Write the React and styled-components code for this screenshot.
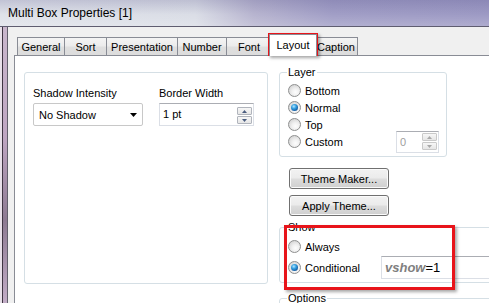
import styled, { createGlobalStyle } from 'styled-components';

const GlobalStyle = createGlobalStyle`
  html, body {
    margin: 0;
    padding: 0;
    background: #f0f0f0;
  }
  body {
    font-family: "Liberation Sans", Arial, sans-serif;
    font-size: 11px;
    color: #000;
  }
`;

const Window = styled.div`
  position: relative;
  width: 489px;
  height: 303px;
  overflow: hidden;
  display: flex;
  flex-direction: column;
`;

const TitleBar = styled.div`
  flex: none;
  height: 26px;
  padding-left: 8px;
  display: flex;
  align-items: center;
  font-size: 12px;
  border-bottom: 1px solid #5f5d70;
  background:
    linear-gradient(180deg, rgba(60, 55, 120, 0.18) 0%, rgba(255, 255, 255, 0) 55%, rgba(255, 255, 255, 0.18) 100%),
    linear-gradient(90deg, #dfe2e9 0%, #dadde6 40%, #b7b4cf 52%, #a19ec6 68%, #9d9ac4 100%);
`;

const Frame = styled.div`
  flex: 1;
  display: flex;
  min-height: 0;
`;

const SideBorder = styled.div`
  flex: none;
  width: 7px;
  background:
    linear-gradient(90deg, #e9e1ea 0 2px, #3f3542 2px 3px, transparent 3px),
    linear-gradient(180deg, #c9b6cc 0%, #bfa6c2 40%, #8d7a92 70%, #c2acc6 100%);
`;

const Client = styled.div`
  flex: 1;
  display: flex;
  flex-direction: column;
  min-width: 0;
  background: #f0f0f0;
  border-left: 1px solid #62606c;
  padding: 7px 0 0 6px;
`;

const TabStrip = styled.div`
  flex: none;
  height: 21px;
  display: flex;
  align-items: flex-end;
  padding-left: 3px;
`;

const Tab = styled.div`
  box-sizing: border-box;
  flex: none;
  width: ${(p) => p.$w}px;
  height: ${(p) => (p.$active ? 22 : 18)}px;
  margin: 0 ${(p) => (p.$active ? -3 : -1)}px ${(p) => (p.$active ? -1 : 0)}px ${(p) => (p.$active ? -2 : 0)}px;
  padding-bottom: ${(p) => (p.$active ? 2 : 0)}px;
  display: flex;
  align-items: center;
  justify-content: center;
  border: 1px solid #898c95;
  border-bottom: none;
  position: relative;
  z-index: ${(p) => (p.$active ? 1 : 0)};
  background: ${(p) =>
    p.$active
      ? '#ffffff'
      : 'linear-gradient(180deg, #f4f4f4 0%, #ececec 45%, #dfdfdf 55%, #dcdcdc 100%)'};
`;

const Panel = styled.div`
  flex: 1;
  display: flex;
  gap: 11px;
  align-items: flex-start;
  margin-right: -30px;
  padding: 16px 0 0 9px;
  background: #fff;
  border: 1px solid #898c95;
`;

const Group = styled.div`
  box-sizing: border-box;
  flex: none;
  width: 244px;
  height: 212px;
  border: 1px solid #d5dfe5;
  border-radius: 3px;
  padding: 14px 8px;
  display: flex;
  gap: 16px;
`;

const Field = styled.div`
  display: flex;
  flex-direction: column;
  gap: 3px;
`;

const Label = styled.div`
  line-height: 13px;
`;

const Combo = styled.div`
  box-sizing: border-box;
  width: 110px;
  height: 23px;
  display: flex;
  align-items: center;
  justify-content: space-between;
  padding: 1px 5px 0 5px;
  border: 1px solid #c8c8c8;
  border-radius: 2px;
  background: #fff;
`;

const SpinBox = styled.div`
  box-sizing: border-box;
  width: ${(p) => p.$w}px;
  height: ${(p) => p.$h}px;
  display: flex;
  align-items: ${(p) => (p.$top ? 'flex-start' : 'center')};
  justify-content: space-between;
  padding: ${(p) => (p.$top ? '4px' : '0')} 1px 0 3px;
  border: 1px solid #dbdfe6;
  border-top-color: #abadb3;
  background: #fff;
  color: ${(p) => (p.$disabled ? '#a0a0a0' : '#000')};
  margin-left: ${(p) => (p.$push ? 'auto' : '0')};
`;

const SpinButtons = styled.div`
  display: flex;
  flex-direction: column;
  gap: 1px;
  margin-top: ${(p) => p.$offset}px;
`;

const SpinButton = styled.div`
  box-sizing: border-box;
  width: 15px;
  height: 8px;
  display: flex;
  align-items: center;
  justify-content: center;
  border: 1px solid ${(p) => (p.$disabled ? '#c9c9c9' : '#b0b4bc')};
  border-radius: 1px;
  background: linear-gradient(180deg, #f7f7f7 0%, #e6e6e6 100%);
`;

const Column = styled.div`
  flex: none;
  width: 240px;
  margin-top: -6px;
  display: flex;
  flex-direction: column;
`;

const FieldSet = styled.fieldset`
  box-sizing: border-box;
  width: ${(p) => p.$w}px;
  margin: ${(p) => p.$mt}px 0 0 0;
  padding: ${(p) => p.$pt}px 7px ${(p) => p.$pb}px 8px;
  border: 1px solid #d5dfe5;
  border-radius: 3px;
  min-width: 0;
`;

const Legend = styled.legend`
  padding: 0 1px;
  margin-left: -1px;
  line-height: 13px;
`;

const Row = styled.div`
  height: ${(p) => p.$h || 17}px;
  display: flex;
  align-items: center;
  margin-top: ${(p) => p.$mt || 0}px;
`;

const Choice = styled.label`
  display: flex;
  align-items: center;
  gap: 4px;
  width: ${(p) => (p.$w ? `${p.$w}px` : 'auto')};
  flex: none;
`;

const Radio = styled.span`
  box-sizing: border-box;
  position: relative;
  width: 13px;
  height: 13px;
  border-radius: 50%;
  border: 1px solid #8e8f8f;
  background: radial-gradient(circle at 60% 65%, #fdfdfd 0%, #f1f1f1 35%, #d4d4d4 80%, #c9c9c9 100%);

  &::after {
    content: '';
    display: ${(p) => (p.$checked ? 'block' : 'none')};
    position: absolute;
    left: 2px;
    top: 2px;
    width: 7px;
    height: 7px;
    border-radius: 50%;
    background: radial-gradient(circle at 40% 35%, #b7e6ff 0%, #36a2e2 35%, #13589f 75%, #0e3d75 100%);
  }
`;

const Button = styled.button`
  box-sizing: border-box;
  width: 100px;
  height: 21px;
  margin: ${(p) => p.$mt}px 0 0 10px;
  padding: 0;
  font-family: inherit;
  font-size: 11px;
  color: #000;
  border: 1px solid #707070;
  border-radius: 3px;
  box-shadow: inset 0 0 0 1px #fbfbfb;
  background: linear-gradient(180deg, #f2f2f2 0%, #ebebeb 48%, #dddddd 52%, #cfcfcf 100%);
`;

const ExprInput = styled.div`
  box-sizing: border-box;
  width: 140px;
  height: 23px;
  display: flex;
  align-items: center;
  padding-left: 3px;
  font-size: 13px;
  border: 1px solid #dbdfe6;
  border-top-color: #abadb3;
  background: #fff;
`;

const Var = styled.span`
  font-style: italic;
  font-weight: bold;
  color: #7f7f7f;
`;

const Highlight = styled.div`
  position: absolute;
  box-sizing: border-box;
  left: ${(p) => p.$x}px;
  top: ${(p) => p.$y}px;
  width: ${(p) => p.$w}px;
  height: ${(p) => p.$h}px;
  border: ${(p) => p.$b}px solid #e8141a;
  box-shadow: 2px 2px 3px rgba(0, 0, 0, 0.35);
  pointer-events: none;
`;

const Arrow = ({ up, color = '#4a5d80', w = 7, h = 4 }) => (
  <svg width={w} height={h} viewBox="0 0 7 4">
    <polygon points={up ? '0,4 7,4 3.5,0' : '0,0 7,0 3.5,4'} fill={color} />
  </svg>
);

const Spinner = ({ disabled, offset }) => (
  <SpinButtons $offset={offset}>
    <SpinButton $disabled={disabled}>
      <Arrow up w={5} h={3} color={disabled ? '#a8a8a8' : '#4a5d80'} />
    </SpinButton>
    <SpinButton $disabled={disabled}>
      <Arrow w={5} h={3} color={disabled ? '#a8a8a8' : '#4a5d80'} />
    </SpinButton>
  </SpinButtons>
);

const tabs = [
  ['General', 48],
  ['Sort', 43],
  ['Presentation', 72],
  ['Number', 50],
  ['Font', 46],
  ['Layout', 48, true],
  ['Caption', 44],
];

const layers = [
  ['Bottom', false],
  ['Normal', true],
  ['Top', false],
];

export default function App() {
  return (
    <>
      <GlobalStyle />
      <Window>
        <TitleBar>Multi Box Properties [1]</TitleBar>
        <Frame>
          <SideBorder />
          <Client>
            <TabStrip>
              {tabs.map(([name, w, active]) => (
                <Tab key={name} $w={w} $active={active}>
                  {name}
                </Tab>
              ))}
            </TabStrip>
            <Panel>
              <Group>
                <Field>
                  <Label>Shadow Intensity</Label>
                  <Combo>
                    No Shadow
                    <Arrow color="#000" />
                  </Combo>
                </Field>
                <Field>
                  <Label>Border Width</Label>
                  <SpinBox $w={95} $h={23} $top>
                    1 pt
                    <Spinner offset={-1} />
                  </SpinBox>
                </Field>
              </Group>

              <Column>
                <FieldSet $w={168} $mt={0} $pt={3} $pb={6}>
                  <Legend>Layer</Legend>
                  {layers.map(([name, checked]) => (
                    <Row key={name}>
                      <Choice>
                        <Radio $checked={checked} />
                        {name}
                      </Choice>
                    </Row>
                  ))}
                  <Row>
                    <Choice>
                      <Radio />
                      Custom
                    </Choice>
                    <SpinBox $w={43} $h={22} $disabled $push>
                      0
                      <Spinner disabled offset={0} />
                    </SpinBox>
                  </Row>
                </FieldSet>

                <Button $mt={11}>Theme Maker...</Button>
                <Button $mt={6}>Apply Theme...</Button>

                <FieldSet $w={240} $mt={5} $pt={4} $pb={3}>
                  <Legend>Show</Legend>
                  <Row>
                    <Choice>
                      <Radio />
                      Always
                    </Choice>
                  </Row>
                  <Row $h={23} $mt={1}>
                    <Choice $w={93}>
                      <Radio $checked />
                      Conditional
                    </Choice>
                    <ExprInput>
                      <Var>vshow</Var>=1
                    </ExprInput>
                  </Row>
                </FieldSet>

                <FieldSet $w={240} $mt={9} $pt={20} $pb={0}>
                  <Legend>Options</Legend>
                </FieldSet>
              </Column>
            </Panel>
          </Client>
        </Frame>

        <Highlight $x={268} $y={33} $w={50} $h={23} $b={2} />
        <Highlight $x={284} $y={225} $w={171} $h={65} $b={3} />
      </Window>
    </>
  );
}
